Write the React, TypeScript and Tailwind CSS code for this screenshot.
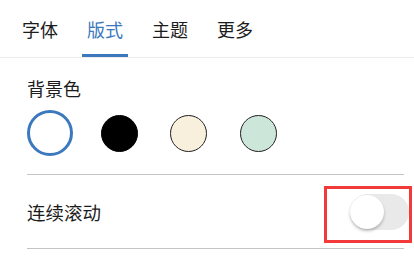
import React from 'react';

const tabs = ['字体', '版式', '主题', '更多'];
const colors = [
  { bg: 'bg-white', ring: 'border-[3px] border-[#3b78bd] w-[46px] h-[46px]' },
  { bg: 'bg-black', ring: 'border border-black w-[37px] h-[37px]' },
  { bg: 'bg-[#f8efdc]', ring: 'border border-[#222] w-[37px] h-[37px]' },
  { bg: 'bg-[#cce6da]', ring: 'border border-[#222] w-[37px] h-[37px]' },
];

export default function App() {
  return (
    <div
      className="w-[414px] h-[267px] bg-white text-[#1c1c1c] overflow-hidden"
      style={{ fontFamily: '"Noto Sans CJK SC", "Noto Sans", sans-serif' }}
    >
      {/* tabs */}
      <div className="flex h-[58px] gap-[19px] border-b border-[#ececec] pl-[17px]">
        {tabs.map((t, i) => (
          <div
            key={t}
            className={
              'flex h-full w-[46px] flex-col items-center justify-between ' +
              (i === 1 ? 'text-[#3b78bd]' : '')
            }
          >
            <span className="pt-[17px] text-[18px] leading-[24px]">{t}</span>
            <span className={'h-[3px] w-[46px] ' + (i === 1 ? 'bg-[#3b78bd]' : 'bg-transparent')} />
          </div>
        ))}
      </div>

      <div className="pl-[27px] pr-[10px]">
        <div className="pt-[18px] text-[18px] leading-[24px]">背景色</div>
        <div className="flex h-[50px] items-center mt-[8px]">
          {colors.map((c, i) => (
            <div key={i} className="w-[69.5px] flex items-center">
              <div className={'rounded-full ' + c.bg + ' ' + c.ring + (i === 0 ? '' : ' ml-[4px]')} />
            </div>
          ))}
        </div>
        <div className="mt-[16px] h-px bg-[#c4c4c4]" />

        <div className="relative flex h-[73px] items-center justify-between">
          <span className="text-[18.5px] leading-[24px]">连续滚动</span>
          <div className="relative mr-[-5px] h-[36px] w-[59px] rounded-full bg-[#e9e9e9]">
            <div className="absolute left-0 top-[1px] h-[34px] w-[34px] rounded-full bg-white shadow-[0_2px_3px_rgba(0,0,0,0.25)]" />
          </div>
          <div className="absolute right-[-8px] top-[11px] h-[57px] w-[88px] border-[3px] border-[#f23a3a]" />
        </div>
        <div className="h-px bg-[#c4c4c4]" />
      </div>
    </div>
  );
}
